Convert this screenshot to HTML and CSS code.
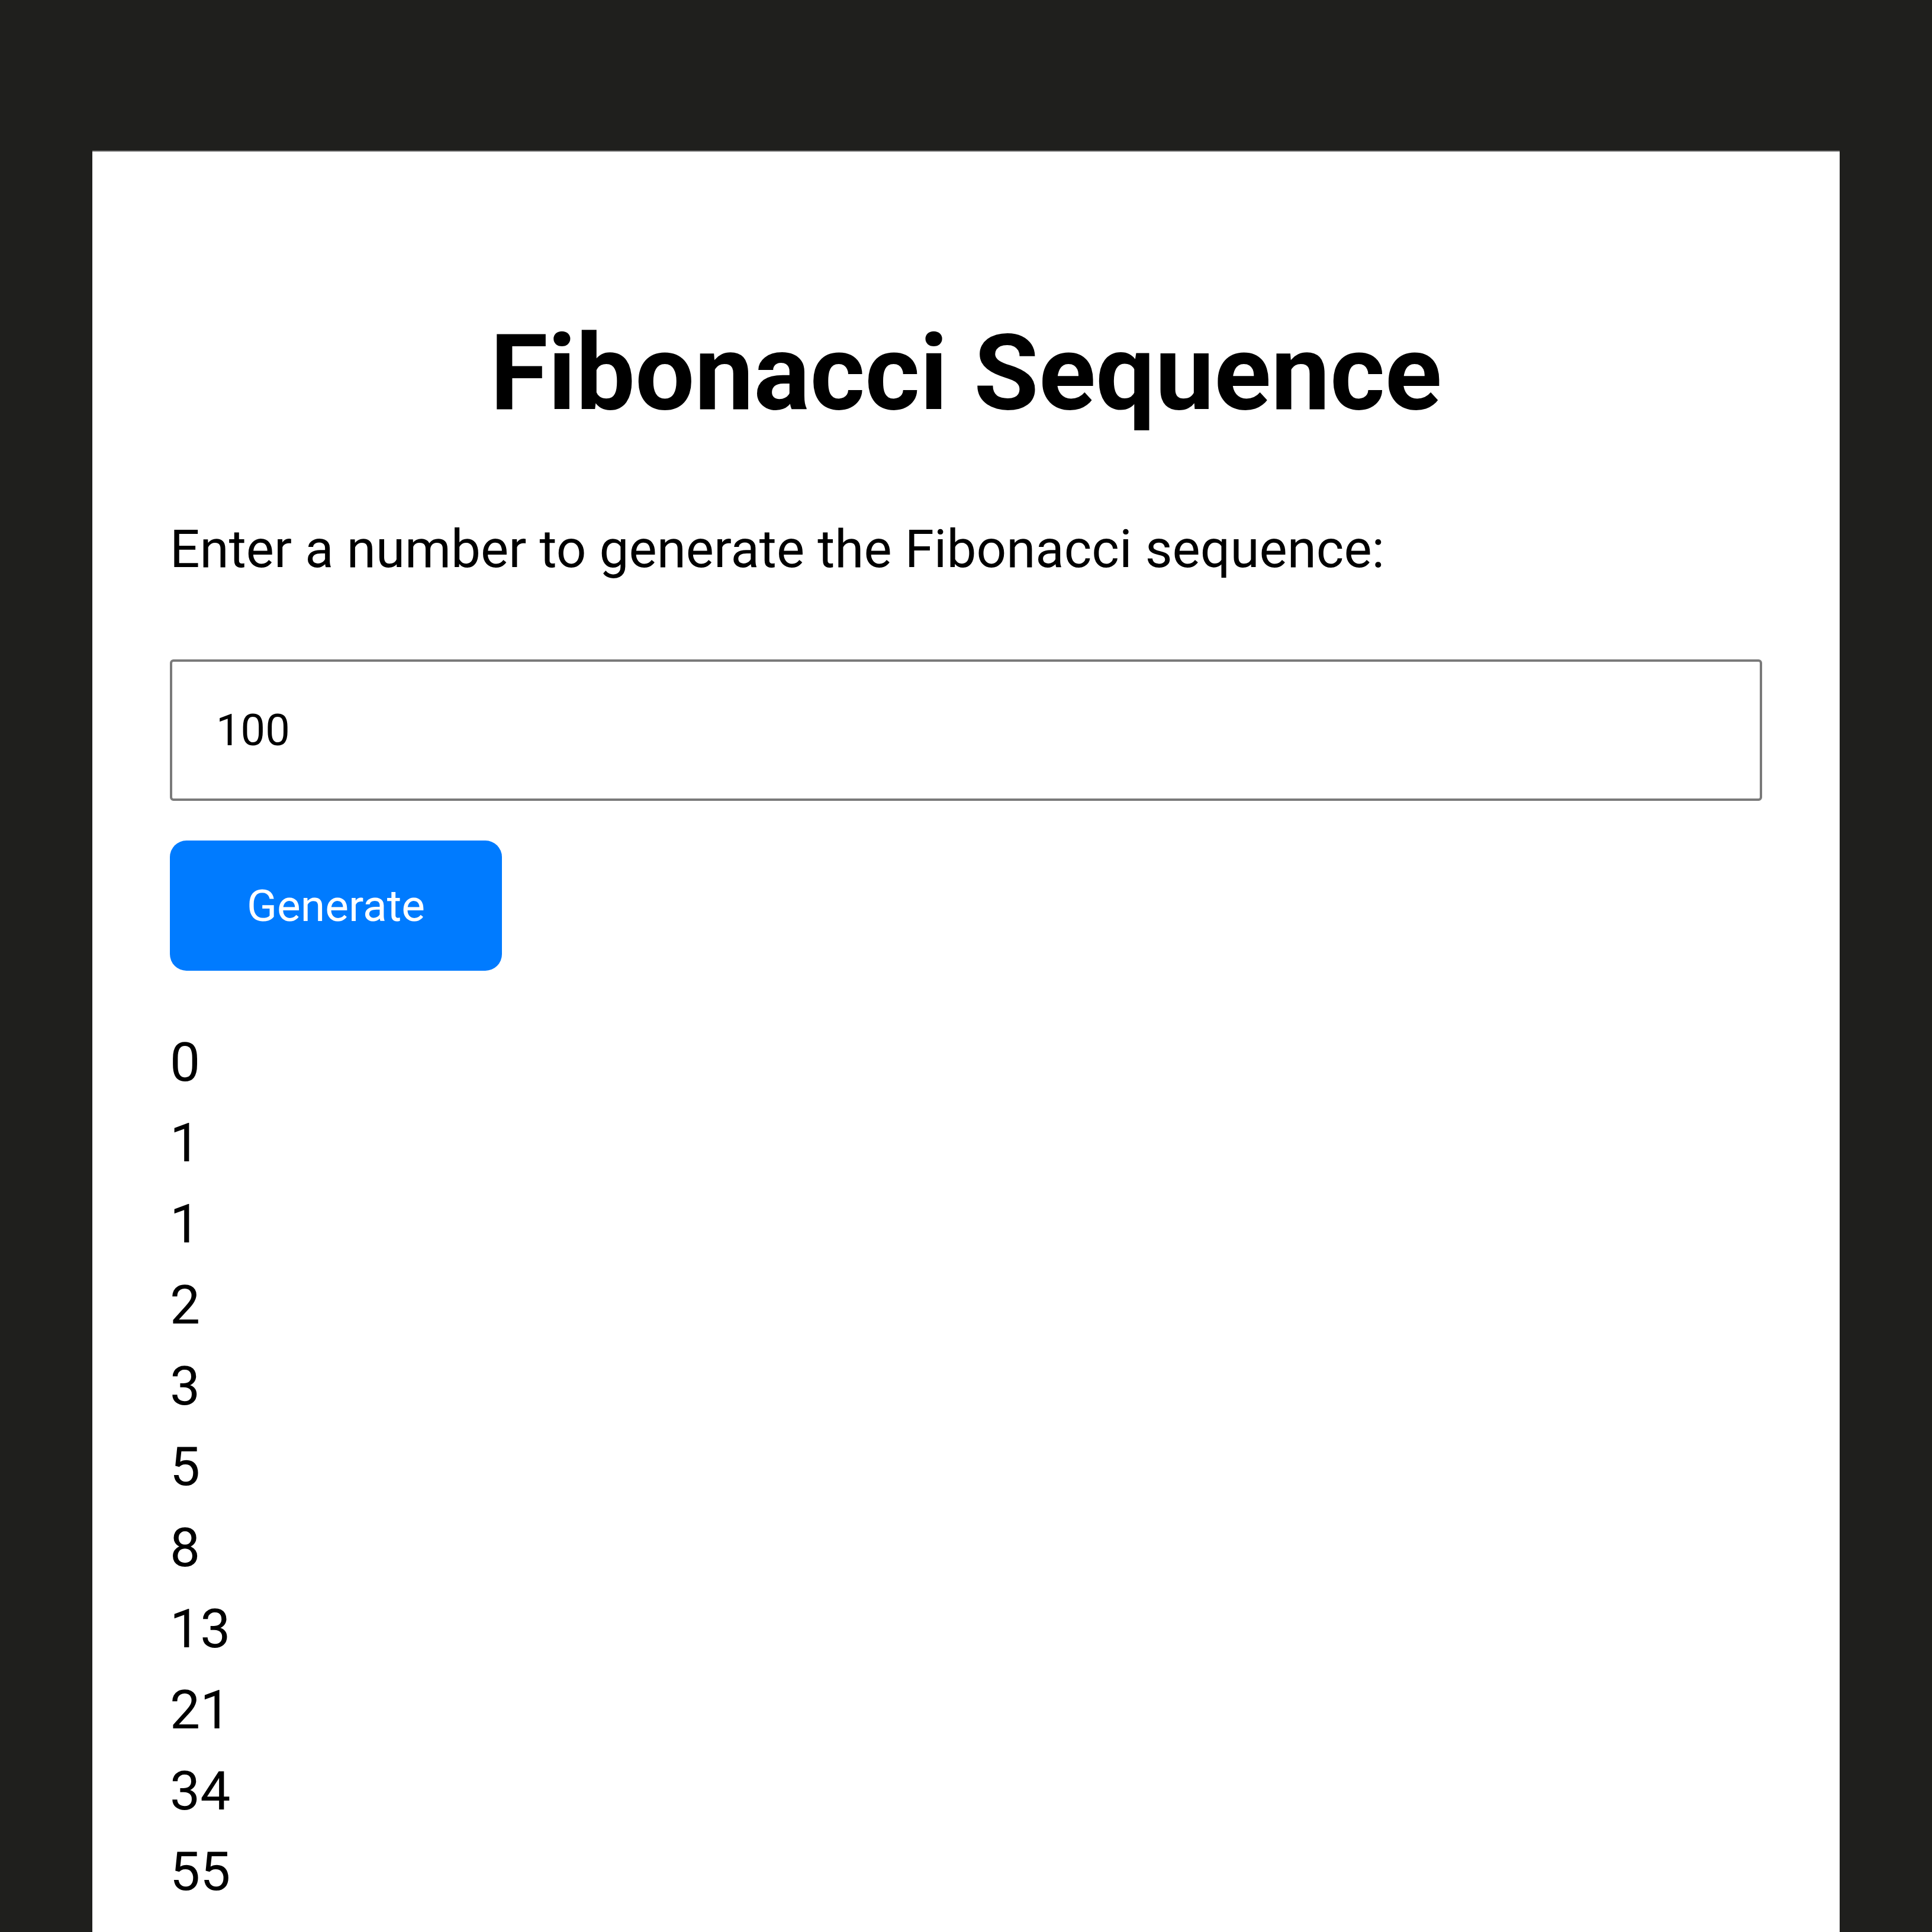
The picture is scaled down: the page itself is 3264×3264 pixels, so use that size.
FILE: index.html
```html
<!DOCTYPE html>
<html lang="en">
<head>
<meta charset="utf-8">
<title>Fibonacci Sequence</title>
<link rel="stylesheet" href="styles.css">
</head>
<body>
<main class="card">
  <h1 class="title">Fibonacci Sequence</h1>
  <p class="prompt">Enter a number to generate the Fibonacci sequence:</p>
  <input class="num-input" type="number" value="100">
  <button class="gen-btn" type="button">Generate</button>
  <div class="results">
    <div class="item">0</div>
    <div class="item">1</div>
    <div class="item">1</div>
    <div class="item">2</div>
    <div class="item">3</div>
    <div class="item">5</div>
    <div class="item">8</div>
    <div class="item">13</div>
    <div class="item">21</div>
    <div class="item">34</div>
    <div class="item">55</div>
  </div>
</main>
</body>
</html>
```

FILE: styles.css
```css
html, body {
  margin: 0;
  padding: 0;
}

body {
  background: #1f1f1d;
  font-family: Roboto, "Liberation Sans", sans-serif;
  color: #000;
  overflow: hidden;
}

.card {
  display: flex;
  flex-direction: column;
  align-items: flex-start;
  margin: 254px 156px 0;
  padding: 270px 131px 200px;
  background: #fff;
  border-top: 2px solid #5e5e5e;
  min-height: 3200px;
}

.title {
  align-self: stretch;
  margin: 0;
  text-align: center;
  font-size: 178px;
  font-weight: 700;
  line-height: normal;
}

.prompt {
  margin: 126px 0 0;
  font-size: 89px;
  line-height: 136.5px;
}

.num-input {
  box-sizing: border-box;
  align-self: stretch;
  margin: 117px 0 0;
  height: 239px;
  padding: 0 0 0 74px;
  border: 4px solid #7a7a7a;
  border-radius: 6px;
  background: #fff;
  font-family: Roboto, "Liberation Sans", sans-serif;
  font-size: 74px;
  color: #000;
  outline: none;
  -moz-appearance: textfield;
}

.num-input::-webkit-outer-spin-button,
.num-input::-webkit-inner-spin-button {
  -webkit-appearance: none;
  margin: 0;
}

.gen-btn {
  box-sizing: border-box;
  margin: 67px 0 0;
  width: 561px;
  height: 220px;
  border: none;
  border-radius: 28px;
  background: #007bff;
  color: #fff;
  font-family: Roboto, "Liberation Sans", sans-serif;
  font-size: 75px;
  padding: 0;
}

.results {
  margin-top: 87px;
}

.item {
  font-size: 91px;
  line-height: 136.8px;
}
```
